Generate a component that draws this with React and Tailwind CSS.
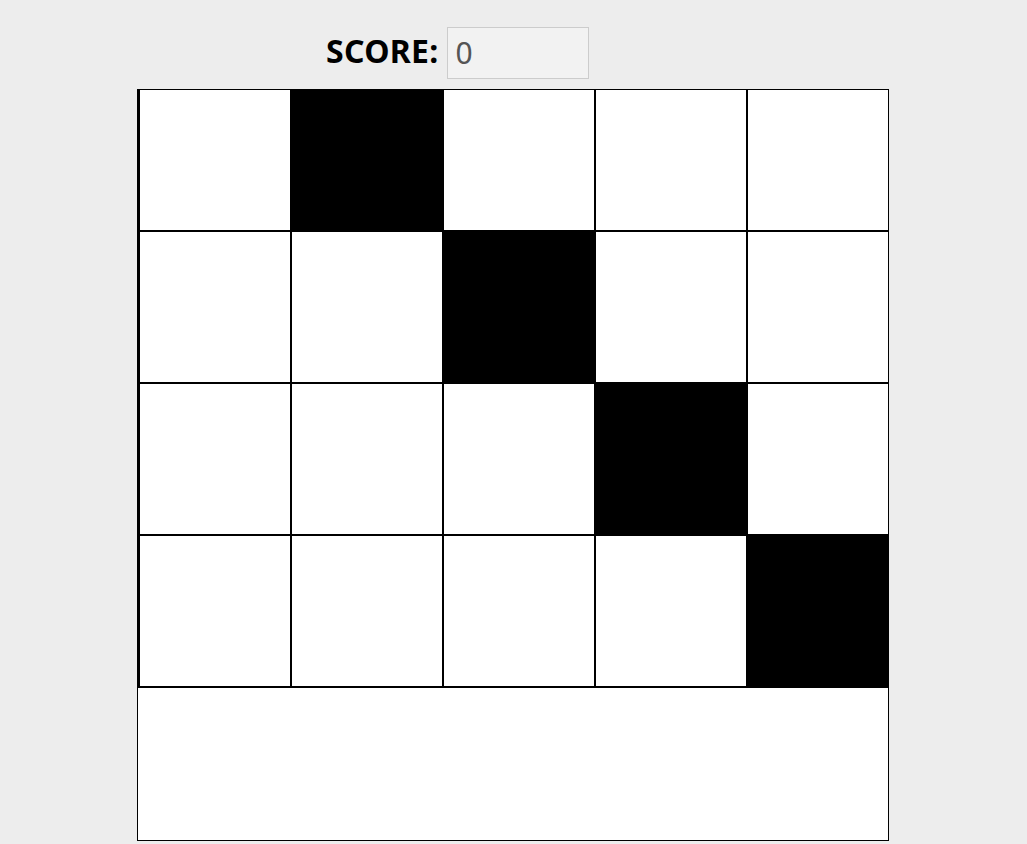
import React from "react";

const BLACK = [
  [false, true, false, false, false],
  [false, false, true, false, false],
  [false, false, false, true, false],
  [false, false, false, false, true],
];

export default function App() {
  return (
    <div
      className="min-h-screen w-full bg-[#ededed]"
      style={{ fontFamily: '"Noto Sans", "Open Sans", sans-serif' }}
    >
      <div className="ml-[137px] w-[752px]">
        <div className="flex items-center gap-[8px] pl-[189px] pt-[27px]">
          <span className="mb-[4px] text-[32px] font-bold leading-none text-black tracking-[0.3px]">
            SCORE:
          </span>
          <input
            readOnly
            value="0"
            className="h-[52px] w-[142px] border border-[#cccccc] bg-[#f2f2f2] pb-[2px] pl-[8px] text-[30px] text-[#555555] outline-none"
            style={{ fontFamily: '"Noto Sans", "Open Sans", sans-serif' }}
          />
        </div>
        <div className="mt-[10px] h-[752px] w-[752px] overflow-hidden border border-black bg-white">
          <div className="-mt-[11px] flex flex-col">
            {BLACK.map((row, r) => (
              <div key={r} className="flex border-l border-black">
                {row.map((b, c) => (
                  <div
                    key={c}
                    className={
                      "h-[152px] w-[152px] shrink-0 border border-black " +
                      (b ? "bg-black" : "bg-white")
                    }
                  />
                ))}
              </div>
            ))}
            <div className="h-[152px] border-t border-black bg-white" />
          </div>
        </div>
      </div>
    </div>
  );
}
